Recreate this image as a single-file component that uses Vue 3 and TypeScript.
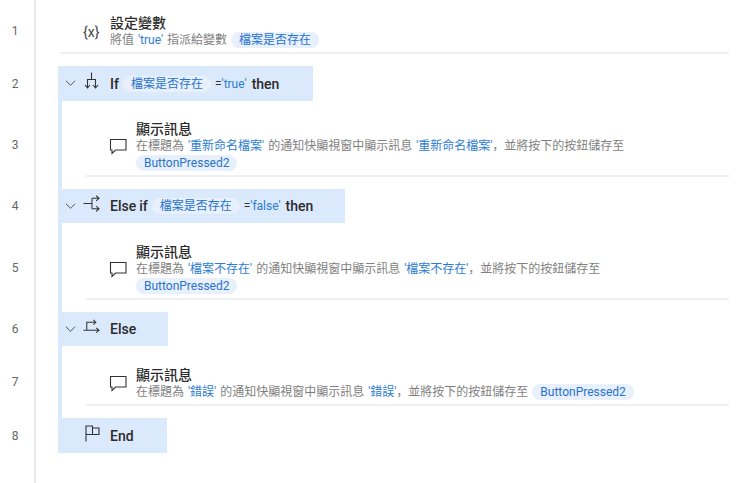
<script setup lang="ts">
type Seg = { t: string; k?: 'v' | 'c' };
const msg = (title: string, text: string): Seg[] => [
  { t: '在標題為 ' }, { t: `'${title}'`, k: 'v' }, { t: ' 的通知快顯視窗中顯示訊息 ' }, { t: `'${text}'`, k: 'v' },
  { t: '，並將按下的按鈕儲存至 ' }, { t: 'ButtonPressed2', k: 'c' },
];
const rows3 = msg('重新命名檔案', '重新命名檔案');
const rows5 = msg('檔案不存在', '檔案不存在');
const rows7 = msg('錯誤', '錯誤');
</script>

<template>
  <main class="page">
    <section class="row r1">
      <div class="num">1</div>
      <div class="action top">
        <div class="inner">
          <span class="varicon">{x}</span>
          <div class="txt">
            <div class="title">設定變數</div>
            <div class="sub">將值 <span class="v">'true'</span> 指派給變數 <span class="chip">檔案是否存在</span></div>
          </div>
        </div>
      </div>
    </section>

    <section class="row r2">
      <div class="num">2</div>
      <div class="head w2">
        <svg class="chev" viewBox="0 0 12 8"><path d="M1 1.5 6 6.5 11 1.5" /></svg>
        <svg class="ic ifi" viewBox="0 0 17 17"><path d="M8.5 .5V8M4.5 16V7.5H12.5V16M2 13 4.5 16 7 13M10 13 12.5 16 15 13" /></svg>
        <span class="kw">If</span><span class="chip hc">檔案是否存在</span><span class="eq">=<span class="v">'true'</span></span><span class="kw then">then</span>
      </div>
    </section>

    <section class="row r3">
      <div class="num">3</div>
      <div class="body">
        <div class="action">
          <div class="inner">
            <svg class="bubble" viewBox="0 0 18 17"><path d="M1.5 1.5H17V12H6.5L3 15.5V12H1.5Z" /></svg>
            <div class="txt">
              <div class="title">顯示訊息</div>
              <div class="sub"><template v-for="(s, i) in rows3" :key="i"><span :class="s.k === 'c' ? 'chip' : s.k">{{ s.t }}</span></template></div>
            </div>
          </div>
        </div>
      </div>
    </section>

    <section class="row r4">
      <div class="num">4</div>
      <div class="head w4">
        <svg class="chev" viewBox="0 0 12 8"><path d="M1 1.5 6 6.5 11 1.5" /></svg>
        <svg class="ic" viewBox="0 0 18 18"><path d="M.5 9H9.5M9.5 3.5V14.5M9.5 3.5H17M9.5 14.5H17M14 .8 17 3.5 14 6.2M14 11.8 17 14.5 14 17.2" /></svg>
        <span class="kw">Else if</span><span class="chip hc">檔案是否存在</span><span class="eq">=<span class="v">'false'</span></span><span class="kw then">then</span>
      </div>
    </section>

    <section class="row r5">
      <div class="num">5</div>
      <div class="body">
        <div class="action">
          <div class="inner">
            <svg class="bubble" viewBox="0 0 18 17"><path d="M1.5 1.5H17V12H6.5L3 15.5V12H1.5Z" /></svg>
            <div class="txt">
              <div class="title">顯示訊息</div>
              <div class="sub"><template v-for="(s, i) in rows5" :key="i"><span :class="s.k === 'c' ? 'chip' : s.k">{{ s.t }}</span></template></div>
            </div>
          </div>
        </div>
      </div>
    </section>

    <section class="row r6">
      <div class="num">6</div>
      <div class="head w6">
        <svg class="chev" viewBox="0 0 12 8"><path d="M1 1.5 6 6.5 11 1.5" /></svg>
        <svg class="ic" viewBox="0 0 18 18"><path d="M.5 13H17M14 10.5 17 13 14 15.5M4 13V4.5H13M11 2 13.5 4.5 11 7" /></svg>
        <span class="kw">Else</span>
      </div>
    </section>

    <section class="row r7">
      <div class="num">7</div>
      <div class="body">
        <div class="action">
          <div class="inner">
            <svg class="bubble" viewBox="0 0 18 17"><path d="M1.5 1.5H17V12H6.5L3 15.5V12H1.5Z" /></svg>
            <div class="txt">
              <div class="title">顯示訊息</div>
              <div class="sub"><template v-for="(s, i) in rows7" :key="i"><span :class="s.k === 'c' ? 'chip' : s.k">{{ s.t }}</span></template></div>
            </div>
          </div>
        </div>
      </div>
    </section>

    <section class="row r8">
      <div class="num">8</div>
      <div class="head w8">
        <svg class="ic flag" viewBox="0 0 15 17"><path d="M1 16.5V1H7.5V3H14V9.5H7.5V3M1 9.5H7.5" /></svg>
        <span class="kw">End</span>
      </div>
    </section>
    <div class="tail"></div>
  </main>
</template>

<style>
html, body { margin: 0; background: #fff; }
</style>

<style scoped>
.page {
  width: 740px;
  height: 483px;
  overflow: hidden;
  background: #fff;
  font-family: Roboto, "Noto Sans CJK SC", sans-serif;
  color: #323130;
}
.row { display: flex; }
.num {
  width: 36px;
  flex: none;
  box-sizing: border-box;
  border-right: 2px solid #e9e9e9;
  display: flex;
  align-items: center;
  justify-content: center;
  padding-right: 4px;
  font-size: 12px;
  color: #666;
}
.r1 { height: 66px; }
.r2 { height: 35px; }
.r3 { height: 88px; }
.r4 { height: 34px; }
.r5 { height: 89px; }
.r6 { height: 34px; }
.r7 { height: 72px; }
.r8 { height: 35px; }
.tail { height: 30px; width: 36px; box-sizing: border-box; border-right: 2px solid #e9e9e9; }
.r1 .num { padding-bottom: 4px; }

.head {
  margin-left: 22px;
  display: flex;
  align-items: center;
  background: #dbe9fd;
  box-sizing: border-box;
  padding-left: 7px;
  white-space: nowrap;
  font-size: 14px;
}
.w2 { width: 255px; }
.w4 { width: 287px; }
.w6 { width: 110px; }
.w8 { width: 109px; }
.chev { width: 11px; height: 8px; flex: none; fill: none; stroke: #444; stroke-width: 1; margin-right: 7px; margin-top: -1px; }
.ic { width: 17px; height: 17px; flex: none; fill: none; stroke: #333; stroke-width: 1.1; margin-right: 10px; margin-top: -5px; }
.ifi { margin-top: -6px; }
.flag { width: 15px; height: 17px; margin-left: 20px; margin-right: 10px; margin-top: -4px; }
.kw { font-weight: 500; font-size: 14px; word-spacing: -0.5px; color: #2b2b2b; }
.then { margin-left: 5px; }
.hc { margin-left: 4px; background: #e3edfc; padding: 0 8px; }
.eq { font-size: 12px; margin-left: 4px; color: #333; }

.body {
  margin-left: 22px;
  flex: 1;
  border-left: 4px solid #dbe9fd;
  box-sizing: border-box;
  display: flex;
  padding-left: 24px;
  padding-right: 11px;
}
.action {
  flex: 1;
  display: flex;
  flex-direction: column;
  justify-content: flex-end;
  box-sizing: border-box;
  border-bottom: 2px solid #f0f0f0;
  margin-bottom: 12px;
  padding: 0 0 3px 23px;
}
.top { margin: 0 11px 12px 24px; }
.inner { display: flex; align-items: center; }
.varicon { width: 27px; flex: none; font-size: 14px; color: #444; }
.bubble { width: 18px; height: 17px; flex: none; fill: #fff; stroke: #333; stroke-width: 1.1; margin-right: 9px; }
.txt { min-width: 0; max-width: 560px; }
.title { font-size: 14px; font-weight: 500; line-height: 18px; color: #2b2b2b; }
.sub { font-size: 12px; line-height: 17px; word-spacing: 1px; color: #7f7f7f; }
.v { color: #2b7cd3; }
.chip {
  display: inline-block;
  line-height: 16px;
  padding: 0 8px;
  border-radius: 9px;
  background: #e8f0fc;
  color: #2672cf;
  font-size: 12px;
}
</style>
